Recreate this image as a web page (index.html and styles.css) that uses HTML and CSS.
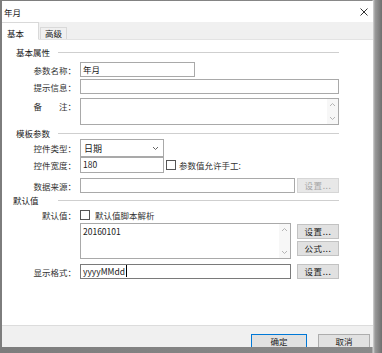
FILE: index.html
```html
<!DOCTYPE html>
<html lang="zh-CN">
<head>
  <meta charset="UTF-8" />
  <title>年月</title>
  <link rel="stylesheet" href="styles.css">
</head>
<body>
  <div class="screen">
    <div class="dialog">
      <div class="titlebar">
        <span class="title">年月</span>
        <svg class="close" width="8" height="8" viewBox="0 0 8 8">
          <path d="M0.5 0.5 L7.5 7.5 M7.5 0.5 L0.5 7.5" stroke="#333" stroke-width="1" fill="none" />
        </svg>
      </div>
      <div class="tabs">
        <div class="tab active">基本</div>
        <div class="tab">高级</div>
      </div>

      <div class="panel">
        <div class="group"><span class="cap">基本属性</span><i class="rule"></i></div>
        <div class="row gap4">
          <span class="lbl">参数名称：</span>
          <div class="field w115">年月</div>
        </div>
        <div class="row gap2">
          <span class="lbl">提示信息：</span>
          <div class="field w259"></div>
        </div>
        <div class="row gap4 top">
          <span class="lbl"><span class="spread">备</span>注：</span>
          <div class="field area w259 h27">
            <div class="scroll">
              <svg width="7" height="5" viewBox="0 0 7 5"><path d="M1 4 L3.5 1.5 L6 4" stroke="#b5b5b5" fill="none" /></svg>
              <svg width="7" height="5" viewBox="0 0 7 5"><path d="M1 1 L3.5 3.5 L6 1" stroke="#b5b5b5" fill="none" /></svg>
            </div>
          </div>
        </div>

        <div class="group gap2"><span class="cap">模板参数</span><i class="rule"></i></div>
        <div class="row">
          <span class="lbl">控件类型：</span>
          <div class="field select w84">
            <span>日期</span>
            <svg width="7" height="5" viewBox="0 0 7 5"><path d="M1 1 L3.5 3.5 L6 1" stroke="#666" fill="none" /></svg>
          </div>
        </div>
        <div class="row">
          <span class="lbl">控件宽度：</span>
          <div class="field w84 h16">180</div>
          <span class="check"></span>
          <span class="note">参数值允许手工:</span>
        </div>
        <div class="row gap5">
          <span class="lbl">数据来源：</span>
          <div class="field w215"></div>
          <button class="btn off">设置...</button>
        </div>

        <div class="group gap1"><span class="cap short">默认值</span><i class="rule"></i></div>
        <div class="row gap3">
          <span class="lbl">默认值：</span>
          <span class="check first"></span>
          <span class="note">默认值脚本解析</span>
        </div>
        <div class="row gap2 top">
          <span class="lbl"></span>
          <div class="field area w211 h36">
            <span>20160101</span>
            <div class="scroll">
              <svg width="7" height="5" viewBox="0 0 7 5"><path d="M1 4 L3.5 1.5 L6 4" stroke="#b5b5b5" fill="none" /></svg>
              <svg width="7" height="5" viewBox="0 0 7 5"><path d="M1 1 L3.5 3.5 L6 1" stroke="#b5b5b5" fill="none" /></svg>
            </div>
          </div>
          <div class="stack">
            <button class="btn">设置...</button>
            <button class="btn">公式...</button>
          </div>
        </div>
        <div class="row gap5">
          <span class="lbl">显示格式：</span>
          <div class="field focus w211"><span class="caret">yyyyMMdd</span></div>
          <button class="btn">设置...</button>
        </div>
      </div>

      <div class="footer">
        <button class="btn big default">确定</button>
        <button class="btn big">取消</button>
      </div>
    </div>
  </div>
</body>
</html>
```

FILE: styles.css
```css
* {
  box-sizing: border-box;
}
body {
  margin: 0;
  font-family: "Noto Sans CJK SC", "Liberation Sans", sans-serif;
  font-size: 8.5px;
  line-height: 12px;
  color: #1a1a1a;
}
.screen {
  width: 382px;
  height: 353px;
  padding: 1px 0 0 2px;
  background: linear-gradient(to right, #7d7d7d 0, #8a8a8a 372px, #d6d6d6 373px, #9a9a9a 375px, #6f6f6f 382px);
  overflow: hidden;
}
.dialog {
  width: 371px;
  height: 346px;
  background: #fff;
  display: flex;
  flex-direction: column;
  overflow: hidden;
}
.titlebar {
  height: 21px;
  display: flex;
  align-items: center;
  justify-content: space-between;
  padding: 0 5px 0 2px;
}
.title {
  font-size: 8.5px;
}
.tabs {
  height: 18px;
  background: #f0f0f0;
  display: flex;
  align-items: flex-end;
  border-bottom: 1px solid #e3e3e3;
}
.tab {
  height: 12px;
  padding: 0 4px;
  margin-left: 1px;
  border: 1px solid #d9d9d9;
  border-bottom: none;
  background: #f0f0f0;
  line-height: 11px;
}
.tab.active {
  height: 18px;
  width: 37px;
  margin-left: 0;
  padding: 0 0 0 5px;
  background: #fff;
  line-height: 20px;
  border-left: none;
  border-bottom: 1px solid #fff;
  margin-bottom: -1px;
}
.panel {
  flex: 1;
  padding-top: 6px;
}
.group {
  display: flex;
  align-items: center;
  height: 12px;
}
.cap {
  width: 56px;
  padding-left: 14px;
}
.cap.short {
  padding-left: 11px;
}
.rule {
  flex: 1;
  height: 1px;
  background: #cfcfcf;
  margin-right: 34px;
}
.row {
  display: flex;
  align-items: center;
}
.row.top {
  align-items: flex-start;
}
.row.top .lbl {
  margin-top: 2px;
}
.gap1 { margin-top: 1px; }
.gap2 { margin-top: 2px; }
.gap3 { margin-top: 3px; }
.gap4 { margin-top: 4px; }
.gap5 { margin-top: 5px; }
.lbl {
  width: 74px;
  margin-right: 4px;
  text-align: right;
  color: #333;
}
.spread {
  margin-right: 17px;
}
.field {
  height: 15px;
  border: 1px solid #a9a9a9;
  background: #fff;
  padding-left: 2px;
  line-height: 13px;
  position: relative;
}
.w84 { width: 84px; }
.w115 { width: 115px; }
.w211 { width: 211px; }
.w215 { width: 215px; }
.w259 { width: 259px; }
.h16 { height: 16px; }
.h27 { height: 27px; }
.h36 { height: 36px; }
.field.area {
  padding-top: 1px;
}
.field.focus {
  border-color: #7a7a7a;
}
.caret {
  border-right: 1px solid #000;
  padding-right: 1px;
}
.scroll {
  position: absolute;
  top: 0;
  right: 0;
  bottom: 0;
  width: 11px;
  background: #f7f7f7;
  display: flex;
  flex-direction: column;
  justify-content: space-between;
  align-items: center;
  padding: 3px 0;
}
.select {
  height: 18px;
  display: flex;
  align-items: center;
  justify-content: space-between;
  padding: 0 4px 0 3px;
  font-size: 9px;
}
.check {
  width: 10px;
  height: 10px;
  border: 1px solid #555;
  background: #fff;
  margin: 0 3px 0 2px;
}
.check.first {
  margin-left: 0;
  margin-right: 5px;
}
.note {
  color: #333;
}
.btn {
  margin-left: 6px;
  width: 42px;
  height: 15px;
  padding: 0;
  font-family: inherit;
  font-size: 8.5px;
  line-height: 13px;
  color: #222;
  background: #e1e1e1;
  border: 1px solid #c2c2c2;
  letter-spacing: 0.6px;
}
.btn.off {
  color: #a6a6a6;
  background: #e8e8e8;
  border-color: #d6d6d6;
  margin-left: 2px;
}
.stack {
  display: flex;
  flex-direction: column;
  gap: 2px;
  margin-top: 1px;
}
.footer {
  height: 22px;
  background: #f0f0f0;
  border-top: 1px solid #dcdcdc;
  display: flex;
  justify-content: flex-end;
  align-items: flex-start;
  padding: 8px 3px 0 0;
}
.btn.big {
  width: 52px;
  height: 15px;
  margin-left: 11px;
  border-color: #adadad;
  letter-spacing: 0;
}
.btn.default {
  width: 56px;
  border-color: #0078d7;
}
```
